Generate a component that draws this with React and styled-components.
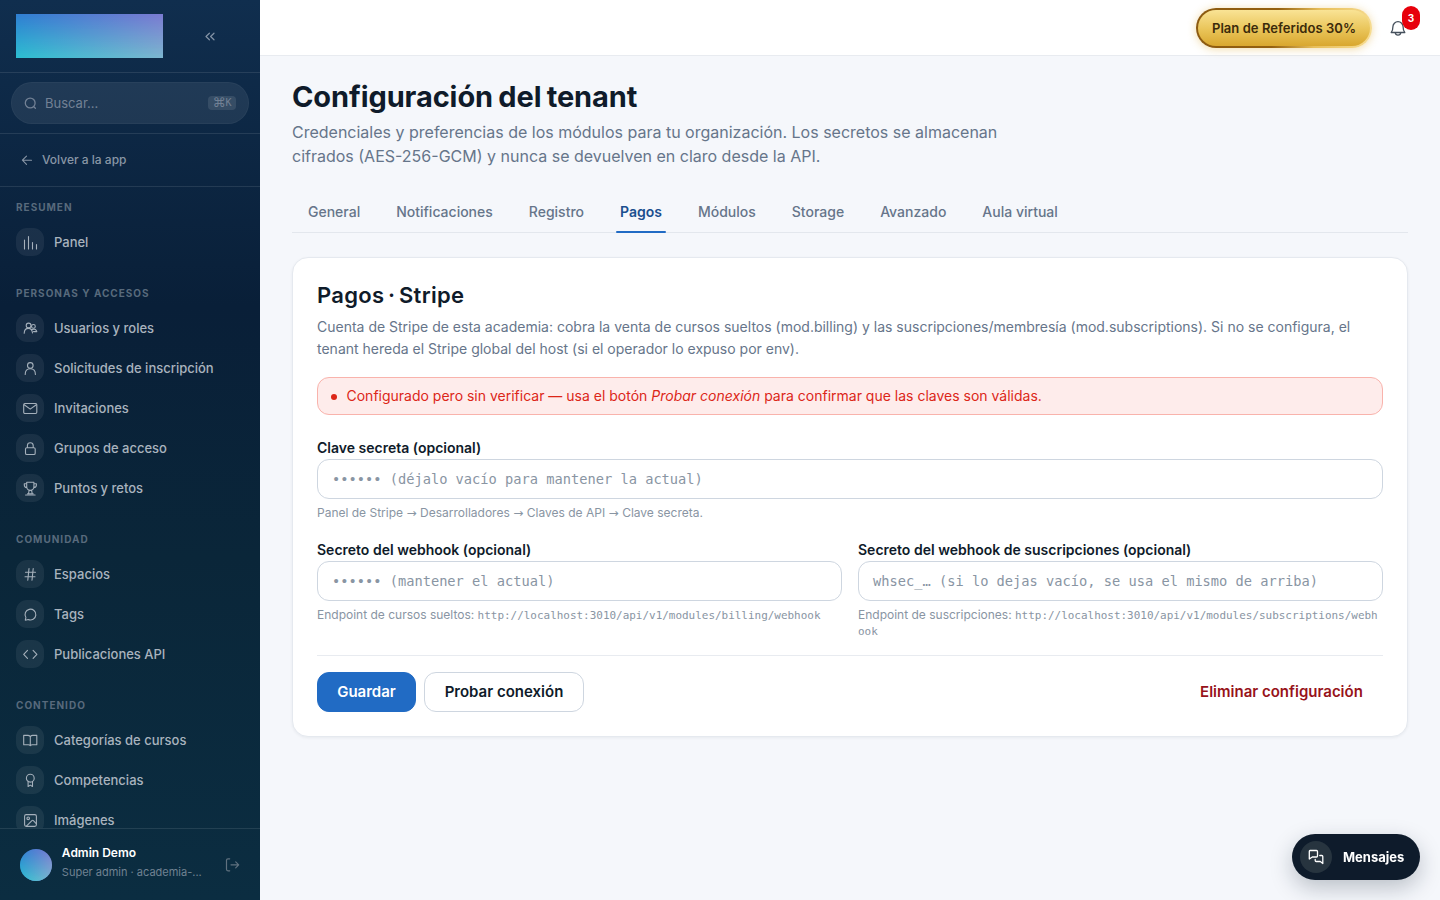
import React from "react";
import styled, { createGlobalStyle, css } from "styled-components";

const Global = createGlobalStyle`
  * { box-sizing: border-box; }
  body { margin: 0; background: #f5f7fb; font-family: Inter, "Liberation Sans", sans-serif; color: #0f1b2a; overflow: hidden; }
  button, input { font-family: inherit; }
  h1, h2, p { margin: 0; }
`;

const Shell = styled.div`
  display: flex;
  height: 900px;
`;

const Sidebar = styled.aside`
  width: 260px;
  flex: none;
  display: flex;
  flex-direction: column;
  background: linear-gradient(180deg, #102e4e 0%, #091f38 34%, #0a2639 62%, #0b2d41 100%);
  color: #fff;
`;

const Brand = styled.div`
  height: 73px;
  flex: none;
  display: flex;
  align-items: flex-start;
  padding: 14px 16px;
  border-bottom: 1px solid rgba(255, 255, 255, 0.1);
`;

const duotone = css`
  overflow: hidden;
  background: linear-gradient(to right, #2f7fd3, #7b7bd2);
  &::after {
    content: "";
    display: block;
    height: 100%;
    background: linear-gradient(to right, #2cbed0, #7db6cf);
    mask-image: linear-gradient(to bottom, transparent, #000);
  }
`;

const Logo = styled.div`
  width: 147px;
  height: 44px;
  ${duotone}
`;

const Collapse = styled.button`
  border: 0;
  padding: 0;
  margin: 14px 0 0 39px;
  background: none;
  color: #8493a6;
  display: flex;
`;

const SearchArea = styled.div`
  height: 61px;
  flex: none;
  padding: 9px 11px;
  border-bottom: 1px solid rgba(255, 255, 255, 0.1);
`;

const Search = styled.div`
  height: 42px;
  border-radius: 21px;
  border: 1px solid rgba(255, 255, 255, 0.035);
  background: rgba(255, 255, 255, 0.08);
  display: flex;
  align-items: center;
  padding: 0 12px 0 10px;
  gap: 7px;
  font-size: 13px;
  color: #728195;
`;

const Shortcut = styled.kbd`
  margin-left: auto;
  width: 28px;
  height: 14px;
  border-radius: 4px;
  background: rgba(255, 255, 255, 0.1);
  display: flex;
  justify-content: center;
  align-items: center;
  font: 10px/14px "DejaVu Sans Mono", monospace;
  margin-bottom: 1px;
  span { font-size: 13px; font-family: "DejaVu Sans", sans-serif; line-height: 12px; }
`;

const Back = styled.div`
  height: 53px;
  flex: none;
  display: flex;
  align-items: center;
  padding: 0 19px 1px;
  gap: 7px;
  border-bottom: 1px solid rgba(255, 255, 255, 0.1);
  font-size: 12px;
  font-weight: 500;
  color: #8996a6;
`;

const Nav = styled.nav`
  flex: 1;
  min-height: 0;
  overflow: hidden;
  padding: 12px 16px 0;
`;

const Group = styled.section`
  margin-bottom: 23px;
`;

const GroupLabel = styled.div`
  height: 17px;
  margin-bottom: 6px;
  font-size: 10px;
  line-height: 17px;
  font-weight: 700;
  letter-spacing: 1px;
  color: #586a7c;
`;

const NavItem = styled.div`
  height: 40px;
  display: flex;
  align-items: center;
  gap: 10px;
  font-size: 13px;
  font-weight: 500;
  color: #a9b3be;
`;

const Chip = styled.span`
  width: 28px;
  height: 28px;
  border-radius: 11px;
  background: rgba(255, 255, 255, 0.065);
  display: flex;
  align-items: center;
  justify-content: center;
  color: #a5b0bb;
`;

const Account = styled.div`
  height: 72px;
  flex: none;
  border-top: 1px solid rgba(255, 255, 255, 0.1);
  display: flex;
  align-items: center;
  padding: 1px 20px 0;
  color: #60717f;
`;

const Avatar = styled.div`
  width: 32px;
  height: 32px;
  border-radius: 50%;
  ${duotone}
`;

const Person = styled.div`
  margin: -4px 0 0 10px;
  width: 163px;
`;

const PersonName = styled.div`
  font-size: 12px;
  font-weight: 600;
  line-height: 18px;
  color: #fff;
`;

const PersonRole = styled.div`
  font-size: 11px;
  line-height: 20px;
  color: #708292;
`;

const Main = styled.main`
  flex: 1;
  min-width: 0;
`;

const Topbar = styled.header`
  height: 56px;
  background: #fff;
  border-bottom: 1px solid #e8ebf0;
  display: flex;
  align-items: center;
  justify-content: flex-end;
  padding-right: 32px;
  gap: 16px;
`;

const Referral = styled.button`
  width: 176px;
  height: 40px;
  border: 2px solid transparent;
  border-radius: 20px;
  background: linear-gradient(180deg, #f9e395 0%, #e9c458 55%, #d9a72f 100%) padding-box,
    linear-gradient(100deg, #8c5a10 0%, #94600f 45%, #e8bf5a 68%, #f7dd93 100%) border-box;
  box-shadow: 0 1px 9px rgba(222, 170, 50, 0.42);
  font-size: 13px;
  font-weight: 600;
  letter-spacing: 0.05px;
  color: #3b2a0b;
  padding: 0;
  white-space: nowrap;
`;

const Bell = styled.div`
  position: relative;
  width: 20px;
  height: 20px;
  color: #45505c;
`;

const Count = styled.span`
  position: absolute;
  left: 14px;
  top: -12px;
  width: 18px;
  height: 24px;
  border-radius: 9px;
  background: #e7000b;
  color: #fff;
  font-size: 10px;
  font-weight: 700;
  line-height: 24px;
  text-align: center;
`;

const Page = styled.div`
  padding: 23px 32px 0;
`;

const Title = styled.h1`
  font-size: 29px;
  line-height: 36px;
  font-weight: 700;
  letter-spacing: -0.1px;
  word-spacing: -1.5px;
  white-space: nowrap;
  color: #0f1b2a;
`;

const Lead = styled.p`
  margin-top: 5px;
  width: 760px;
  font-size: 16px;
  line-height: 24px;
  color: #66758a;
`;

const Tabs = styled.div`
  margin-top: 24px;
  height: 41px;
  display: flex;
  gap: 4px;
  border-bottom: 1px solid #e3e7ed;
`;

const Tab = styled.div`
  padding: 0 16px;
  font-size: 14px;
  line-height: 40px;
  font-weight: ${(p) => (p.$active ? 600 : 500)};
  color: ${(p) => (p.$active ? "#1b4f8f" : "#66758a")};
  display: flex;
  flex-direction: column;
  &::after {
    content: "";
    flex: none;
    height: 2px;
    margin: -1px -4px 0;
    border-radius: 2px;
    background: ${(p) => (p.$active ? "#216bc4" : "transparent")};
  }
`;

const Card = styled.section`
  margin-top: 24px;
  height: 480px;
  border: 1px solid #e5e9ef;
  border-radius: 16px;
  background: #fff;
  box-shadow: 0 1px 3px rgba(15, 30, 50, 0.06);
  padding: 22px 24px;
`;

const CardTitle = styled.h2`
  font-size: 22px;
  line-height: 30px;
  font-weight: 600;
  letter-spacing: 0.3px;
  word-spacing: -2.2px;
  color: #0f1b2a;
`;

const CardText = styled.p`
  margin-top: 6px;
  font-size: 14px;
  line-height: 22px;
  color: #66758a;
`;

const Alert = styled.div`
  margin-top: 17px;
  height: 38px;
  border: 1px solid #f9b3ac;
  border-radius: 12px;
  background: #feeceb;
  color: #dc2618;
  display: flex;
  align-items: center;
  gap: 9.5px;
  padding: 0 13px 1px;
  font-size: 14px;
`;

const Dot = styled.span`
  width: 6px;
  height: 6px;
  border-radius: 50%;
  background: currentColor;
  margin-top: 3px;
`;

const Fields = styled.div`
  margin-top: 22px;
  height: 202px;
  display: grid;
  grid-template-columns: 1fr 1fr;
  grid-template-rows: 84px 100px;
  gap: 18px 16px;
`;

const Field = styled.div`
  min-width: 0;
  grid-column: ${(p) => (p.$wide ? "1 / -1" : "auto")};
`;

const FieldLabel = styled.div`
  height: 22px;
  line-height: 22px;
  font-size: 14px;
  font-weight: 600;
  color: #0f1b2a;
`;

const Input = styled.div`
  height: 40px;
  border: 1px solid #ced6e0;
  border-radius: 12px;
  background: #fff;
  padding: 0 14px;
  font-family: "DejaVu Sans Mono", monospace;
  font-size: 13.69px;
  line-height: 38px;
  white-space: nowrap;
  color: #8995a3;
`;

const Hint = styled.div`
  margin-top: 6px;
  font-size: 12px;
  line-height: 16px;
  color: #8995a3;
`;

const Arrow = styled.span`
  font-family: "DejaVu Sans", sans-serif;
  line-height: 12px;
  margin: 0 0.1px;
`;

const Code = styled.code`
  font-family: "DejaVu Sans Mono", monospace;
  font-size: 10.96px;
  line-height: 12px;
  word-break: break-all;
`;

const Actions = styled.div`
  margin-top: 16px;
  padding-top: 16px;
  border-top: 1px solid #e8ebf0;
  display: flex;
  gap: 8px;
`;

const Button = styled.button`
  height: 40px;
  width: ${(p) => p.$width}px;
  padding: 0 0 2px;
  border-radius: 12px;
  font-size: 15px;
  font-weight: 600;
  white-space: nowrap;
  border: 1px solid ${(p) => ({ primary: "#216bc4", outline: "#ced6e0", danger: "transparent" })[p.$kind]};
  background: ${(p) => ({ primary: "#216bc4", outline: "#fff", danger: "transparent" })[p.$kind]};
  color: ${(p) => ({ primary: "#fff", outline: "#0f1b2a", danger: "#97131a" })[p.$kind]};
  margin-left: ${(p) => (p.$kind === "danger" ? "auto" : 0)};
`;

const Messages = styled.button`
  position: fixed;
  right: 20px;
  bottom: 20px;
  width: 128px;
  height: 46px;
  border: 0;
  border-radius: 23px;
  background: #0e1b2b;
  box-shadow: 0 8px 22px rgba(15, 30, 50, 0.25);
  display: flex;
  align-items: center;
  gap: 11px;
  padding: 0 8px;
  font-size: 13px;
  font-weight: 700;
  color: #fff;
`;

const MessagesIcon = styled.span`
  width: 32px;
  height: 32px;
  flex: none;
  border-radius: 50%;
  background: #27343f;
  display: flex;
  align-items: center;
  justify-content: center;
`;

const Svg = styled.svg`
  display: block;
  flex: none;
  fill: none;
  stroke: currentColor;
  stroke-width: ${(p) => p.$weight || 1.1};
  stroke-linecap: round;
  stroke-linejoin: round;
`;

const shapes = {
  bars: <path d="M2.5 6v9M6.5 2.5V15M10.5 8.5V15M14.5 10.5V15" />,
  users: (
    <>
      <circle cx="6.6" cy="5.5" r="2.4" />
      <circle cx="11.4" cy="6.4" r="1.9" />
      <path d="M2.2 13.3c.1-3 1.9-4.9 4.3-4.9 2.3 0 3.6 1.5 4 4.6M10.3 9.5c2.6-1 4 .2 4.5 2.1h-3.3" />
    </>
  ),
  user: (
    <>
      <circle cx="8.3" cy="5.4" r="2.8" />
      <path d="M3.2 14.4c0-3.5 2.1-5.6 5.1-5.6s5.1 2.1 5.1 5.6" />
    </>
  ),
  mail: (
    <>
      <rect x="1.7" y="3.5" width="13.1" height="10" rx="1.2" />
      <path d="m2.2 4.8 6 4.3 6.1-4.3" />
    </>
  ),
  lock: (
    <>
      <rect x="3.5" y="7.7" width="9.7" height="6.8" rx="1.3" />
      <path d="M5.4 7.5V5.6a2.9 2.9 0 0 1 5.8 0v1.9" />
    </>
  ),
  trophy: (
    <path d="M4.7 2.3h7.2v4.5a3.6 3.6 0 0 1-7.2 0zM4.7 3.7H2.3v1.2c0 1.5 1 2.5 2.6 2.7M11.9 3.7h2.5v1.2c0 1.5-1 2.5-2.7 2.7M7.1 10.5l-.6 3.1M9.6 10.5l.6 3.1M5.5 13.7h5.7M3.6 15h9.5" />
  ),
  hash: <path d="M7 2.5 5.8 14.2M11.2 2.5 10 14.2M3.5 6.2h10M3 10.7h10" />,
  chat: <path d="M3.3 14.2 3.9 11.5A5.4 5.4 0 1 1 6.2 13.5z" />,
  code: <path d="M5.5 4.3 1.7 8.3l3.8 4M11.1 4.3l3.8 4-3.8 4" />,
  book: (
    <path d="M8.3 4.6C7.6 3.7 6.9 3.4 5.8 3.4H1.7v9.4h4.6c.9 0 1.5.3 2 .9M8.3 4.6c.7-.9 1.4-1.2 2.5-1.2h4v9.4h-4.5c-.9 0-1.5.3-2 .9M8.3 4.6v9" />
  ),
  award: (
    <>
      <circle cx="8.3" cy="6.2" r="3.9" />
      <path d="M6.1 9.4v5.1l2.2-1.4 2.2 1.4V9.4" />
    </>
  ),
  image: (
    <>
      <rect x="2.6" y="2.6" width="11.8" height="11.8" rx="1.6" />
      <circle cx="6.2" cy="6.3" r="1.3" />
      <path d="m4.4 14.2 5.5-5.6c.5-.5 1-.5 1.5 0l2.8 3" />
    </>
  ),
  search: (
    <>
      <circle cx="8.2" cy="8" r="4.9" />
      <path d="m11.8 11.7 1.6 1.6" />
    </>
  ),
  back: <path d="M12.5 8.2h-9M7.5 4.1 3.4 8.2l4.1 4.1" />,
  collapse: <path d="M7.4 5.2 4 8.5l3.4 3.3M12 5.2 8.6 8.5l3.4 3.3" />,
  exit: <path d="M5.7 1.8H4c-1 0-1.5.5-1.5 1.5v9c0 1 .5 1.5 1.5 1.5h1.7M7 7.8h7.7M11.7 4.8l3 3-3 3" />,
  threads: (
    <path d="M2 1.5h6.5c.6 0 1 .4 1 1V7c0 .6-.4 1-1 1H4.3L1.3 10V2.5c0-.6.3-1 .7-1zM11.8 6.5h2c.6 0 1 .4 1 1v7l-2.5-2H8.2c-.7 0-1-.4-1-1V10.5" />
  ),
};

const Icon = ({ name, size = 16, weight }) => (
  <Svg viewBox="0 0 16 16" width={size} height={size} $weight={weight}>
    {shapes[name]}
  </Svg>
);

const groups = [
  ["RESUMEN", [["bars", "Panel"]]],
  [
    "PERSONAS Y ACCESOS",
    [
      ["users", "Usuarios y roles"],
      ["user", "Solicitudes de inscripción"],
      ["mail", "Invitaciones"],
      ["lock", "Grupos de acceso"],
      ["trophy", "Puntos y retos"],
    ],
  ],
  ["COMUNIDAD", [["hash", "Espacios"], ["chat", "Tags"], ["code", "Publicaciones API"]]],
  ["CONTENIDO", [["book", "Categorías de cursos"], ["award", "Competencias"], ["image", "Imágenes"]]],
];

const tabs = ["General", "Notificaciones", "Registro", "Pagos", "Módulos", "Storage", "Avanzado", "Aula virtual"];

export default function App() {
  return (
    <>
      <Global />
      <Shell>
        <Sidebar>
          <Brand>
            <Logo />
            <Collapse><Icon name="collapse" weight={1.2} /></Collapse>
          </Brand>
          <SearchArea>
            <Search>
              <Icon name="search" weight={1.3} />
              Buscar...
              <Shortcut><span>⌘</span>K</Shortcut>
            </Search>
          </SearchArea>
          <Back><Icon name="back" weight={1.1} />Volver a la app</Back>
          <Nav>
            {groups.map(([label, items]) => (
              <Group key={label}>
                <GroupLabel>{label}</GroupLabel>
                {items.map(([icon, text]) => (
                  <NavItem key={text}>
                    <Chip><Icon name={icon} /></Chip>
                    {text}
                  </NavItem>
                ))}
              </Group>
            ))}
          </Nav>
          <Account>
            <Avatar />
            <Person>
              <PersonName>Admin Demo</PersonName>
              <PersonRole>Super admin · academia-...</PersonRole>
            </Person>
            <Icon name="exit" weight={1.2} />
          </Account>
        </Sidebar>
        <Main>
          <Topbar>
            <Referral>Plan de Referidos 30%</Referral>
            <Bell>
              <Svg viewBox="0 0 20 20" width="20" height="20" $weight={1.3}>
                <path d="M3.2 14.5c1.5-1.4 1.7-2.8 1.7-5.7a5.1 5.1 0 0 1 10.2 0c0 2.9.2 4.3 1.7 5.7zM7.2 14.7c.2 1.5 1.3 2.4 2.8 2.4s2.6-.9 2.8-2.4" />
              </Svg>
              <Count>3</Count>
            </Bell>
          </Topbar>
          <Page>
            <Title>Configuración del tenant</Title>
            <Lead>
              Credenciales y preferencias de los módulos para tu organización. Los secretos se almacenan
              <br />
              cifrados (AES-256-GCM) y nunca se devuelven en claro desde la API.
            </Lead>
            <Tabs>
              {tabs.map((t) => <Tab key={t} $active={t === "Pagos"}>{t}</Tab>)}
            </Tabs>
            <Card>
              <CardTitle>Pagos · Stripe</CardTitle>
              <CardText>
                Cuenta de Stripe de esta academia: cobra la venta de cursos sueltos (mod.billing) y las suscripciones/membresía (mod.subscriptions). Si no se configura, el
                <br />
                tenant hereda el Stripe global del host (si el operador lo expuso por env).
              </CardText>
              <Alert>
                <Dot />
                <span>Configurado pero sin verificar — usa el botón <em>Probar conexión</em> para confirmar que las claves son válidas.</span>
              </Alert>
              <Fields>
                <Field $wide>
                  <FieldLabel>Clave secreta (opcional)</FieldLabel>
                  <Input>•••••• (déjalo vacío para mantener la actual)</Input>
                  <Hint>
                    Panel de Stripe <Arrow>→</Arrow> Desarrolladores <Arrow>→</Arrow> Claves de API <Arrow>→</Arrow> Clave secreta.
                  </Hint>
                </Field>
                <Field>
                  <FieldLabel>Secreto del webhook (opcional)</FieldLabel>
                  <Input>•••••• (mantener el actual)</Input>
                  <Hint>Endpoint de cursos sueltos: <Code>http://localhost:3010/api/v1/modules/billing/webhook</Code></Hint>
                </Field>
                <Field>
                  <FieldLabel>Secreto del webhook de suscripciones (opcional)</FieldLabel>
                  <Input>whsec_… (si lo dejas vacío, se usa el mismo de arriba)</Input>
                  <Hint>Endpoint de suscripciones: <Code>http://localhost:3010/api/v1/modules/subscriptions/webhook</Code></Hint>
                </Field>
              </Fields>
              <Actions>
                <Button $kind="primary" $width={99}>Guardar</Button>
                <Button $kind="outline" $width={160}>Probar conexión</Button>
                <Button $kind="danger" $width={203}>Eliminar configuración</Button>
              </Actions>
            </Card>
          </Page>
        </Main>
      </Shell>
      <Messages>
        <MessagesIcon><Icon name="threads" weight={1.3} /></MessagesIcon>
        Mensajes
      </Messages>
    </>
  );
}
